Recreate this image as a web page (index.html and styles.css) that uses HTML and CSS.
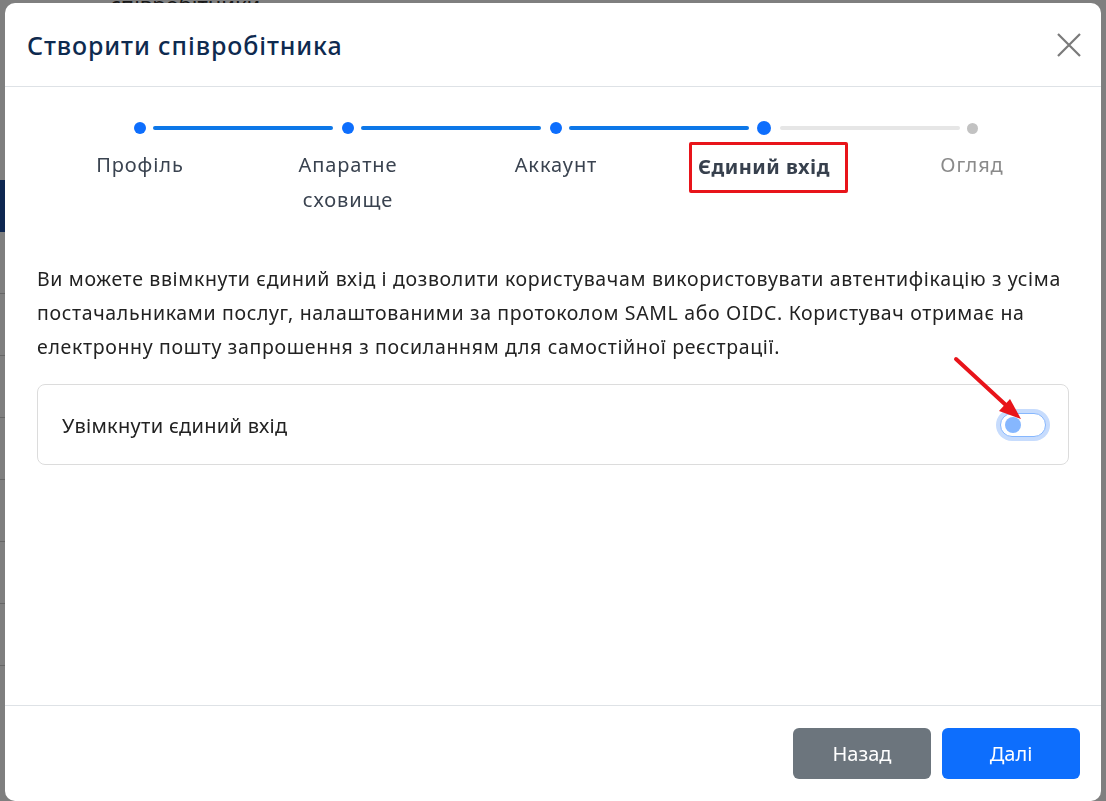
FILE: index.html
```html
<!DOCTYPE html>
<html lang="uk">
<head>
<meta charset="utf-8">
<link rel="stylesheet" href="styles.css">
</head>
<body>
<div class="page">
  <div class="page-title">співробітники</div>
  <div class="page-side">
    <div class="side-blue"></div>
    <div class="side-row"></div>
    <div class="side-row"></div>
    <div class="side-row"></div>
    <div class="side-row"></div>
    <div class="side-row"></div>
    <div class="side-row"></div>
    <div class="side-row"></div>
  </div>
</div>
<div class="backdrop"></div>
<div class="modal">
  <header class="modal-header">
    <h1 class="modal-title">Створити співробітника</h1>
    <button class="close" aria-label="Закрити">
      <svg width="24" height="24" viewBox="0 0 24 24"><path d="M1 1L23 23M23 1L1 23" stroke="#7a7a7a" stroke-width="2.2" fill="none"/></svg>
    </button>
  </header>
  <div class="modal-body">
    <div class="stepper">
      <div class="step done"><div class="track"><span class="dot"></span><span class="line blue"></span></div><div class="label">Профіль</div></div>
      <div class="step done"><div class="track"><span class="dot"></span><span class="line blue"></span></div><div class="label">Апаратне<br>сховище</div></div>
      <div class="step done"><div class="track"><span class="dot"></span><span class="line blue"></span></div><div class="label">Аккаунт</div></div>
      <div class="step active"><div class="track"><span class="dot"></span><span class="line gray"></span></div><div class="label"><span class="hl">Єдиний вхід</span></div></div>
      <div class="step todo"><div class="track"><span class="dot"></span></div><div class="label">Огляд</div></div>
    </div>
    <p class="desc">Ви можете ввімкнути єдиний вхід і дозволити користувачам використовувати автентифікацію з усіма постачальниками послуг, налаштованими за протоколом SAML або OIDC. Користувач отримає на електронну пошту запрошення з посиланням для самостійної реєстрації.</p>
    <div class="option">
      <span class="option-label">Увімкнути єдиний вхід</span>
      <span class="switch"><span class="knob"></span></span>
      <svg class="arrow" width="80" height="70" viewBox="0 0 80 70"><line x1="4" y1="4" x2="56" y2="52" stroke="#e8141a" stroke-width="4" stroke-linecap="round"/><polygon points="69,64 47,56 58,44" fill="#e8141a"/></svg>
    </div>
  </div>
  <footer class="modal-footer">
    <button class="btn btn-secondary">Назад</button>
    <button class="btn btn-primary">Далі</button>
  </footer>
</div>
</body>
</html>
```
FILE: styles.css
```css
* { box-sizing: border-box; }
html, body { margin: 0; height: 100%; }
body {
  background: #fff;
  font-family: "Noto Sans", "Open Sans", sans-serif;
  overflow: hidden;
}
.page { position: relative; height: 801px; }
.page-title {
  padding-left: 110px;
  font-size: 22px;
  color: #333;
  line-height: 8px;
  height: 8px;
  overflow: hidden;
}
.page-side { padding-top: 172px; width: 20px; }
.side-blue { height: 52px; background: #1d4fa3; }
.side-row { height: 62px; border-bottom: 1px solid #ccc; }
.backdrop {
  position: fixed; inset: 0;
  background: rgba(0,0,0,0.5);
}
.modal {
  position: fixed;
  left: 5px; top: 3px;
  width: 1096px; height: 798px;
  background: #fff;
  border-radius: 10px;
  display: flex; flex-direction: column;
}
.modal-header {
  height: 84px;
  border-bottom: 1px solid #dee2e6;
  display: flex; align-items: center; justify-content: space-between;
  padding: 0 20px 0 22px;
}
.modal-title {
  margin: 0;
  font-family: "Noto Sans", sans-serif;
  font-weight: 500;
  font-size: 25px;
  color: #0e2a4f;
  letter-spacing: 0.9px;
}
.close {
  background: none; border: 0; padding: 0; width: 24px; height: 24px;
  display: flex;
}
.modal-body { flex: 1; padding: 0 32px; }
.stepper {
  display: grid;
  grid-template-columns: repeat(5, 208px);
  margin: 33px 0 0 -1px;
}
.step { display: flex; flex-direction: column; align-items: center; }
.track { position: relative; width: 100%; height: 16px; display: flex; justify-content: center; align-items: center; }
.dot { width: 12px; height: 12px; border-radius: 50%; background: #0d6efd; position: relative; z-index: 1; }
.active .dot { width: 14px; height: 14px; }
.todo .dot { width: 11px; height: 11px; background: #c2c2c2; }
.line {
  position: absolute; left: calc(50% + 13px); width: 180px; top: 6px; height: 4px; border-radius: 2px;
}
.line.blue { background: #0d77e8; }
.line.gray { background: #e6e6e6; left: calc(50% + 16px); }
.label {
  margin-top: 11px;
  text-align: center;
  font-size: 20px;
  line-height: 35px;
  letter-spacing: 0.9px;
  color: #3a4350;
  font-family: "Noto Sans", sans-serif;
}
.active .label { font-weight: 700; color: #37404d; letter-spacing: 0.5px; }
.todo .label { color: #8a8a8a; }
.hl {
  display: inline-block;
  border: 3px solid #e8141a;
  border-radius: 2px;
  padding: 4px 15px 6px 6px;
  line-height: 35px;
  margin-top: -5px;
  margin-left: 9px;
}
.desc {
  margin: 45px 0 0 0;
  font-size: 19.5px;
  line-height: 34px;
  letter-spacing: 0.66px;
  color: #222;
  font-family: "Noto Sans", sans-serif;
}
.option {
  position: relative;
  margin-top: 20px;
  height: 81px;
  border: 1px solid #dcdcdc;
  border-radius: 8px;
  display: flex; align-items: center; justify-content: space-between;
  padding: 0 22px 0 24px;
}
.option-label { font-size: 20px; letter-spacing: 0.3px; color: #222; margin-top: 2px; }
.switch {
  width: 46px; height: 24px;
  border: 1px solid #86b7fe;
  border-radius: 12px;
  box-shadow: 0 0 0 4px #c7dcfd;
  display: flex; align-items: center; padding-left: 4px;
  background: #fff;
}
.knob { width: 16px; height: 16px; border-radius: 50%; background: #86b7fe; }
.arrow { position: absolute; right: 36px; top: -30px; }
.modal-footer {
  height: 96px;
  border-top: 1px solid #dee2e6;
  display: flex; justify-content: flex-end; align-items: flex-start;
  padding: 22px 21px 0 0; gap: 11px;
}
.btn {
  width: 138px; height: 51px;
  border: 0; border-radius: 6px;
  color: #fff;
  font-size: 20px;
  font-family: "Noto Sans", sans-serif;
}
.btn-secondary { background: #6c757d; }
.btn-primary { background: #0d6efd; }
```
